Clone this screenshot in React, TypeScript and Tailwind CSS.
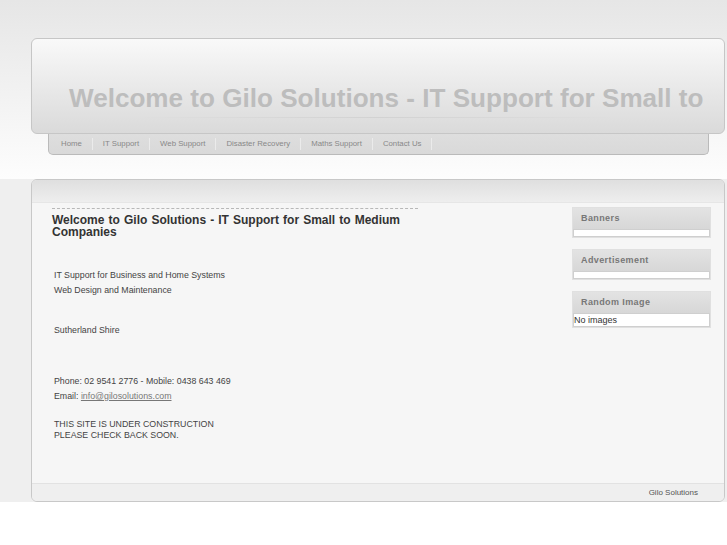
import React from 'react';

const navItems = ['Home', 'IT Support', 'Web Support', 'Disaster Recovery', 'Maths Support', 'Contact Us'];

function SideModule({ title, children, bodyClass }: { title: string; children?: React.ReactNode; bodyClass: string }) {
  return (
    <div className="mb-[11px] border border-[#e0e0e0] bg-[#dadada]">
      <div className="flex h-[21px] items-center bg-gradient-to-b from-[#e3e3e3] to-[#d7d7d7] pl-[8px] text-[9px] font-bold tracking-[0.4px] text-[#777]">
        {title}
      </div>
      <div className={`border border-[#cfcfcf] bg-white text-[9px] leading-[12px] text-[#333] ${bodyClass}`}>{children}</div>
    </div>
  );
}

export default function App() {
  return (
    <div className="min-h-[545px] bg-white font-['Liberation_Sans',Arial,sans-serif]">
      {/* Header area */}
      <div className="h-[179px] bg-gradient-to-b from-[#e6e6e6] to-[#fdfdfd] pt-[38px]">
        <div className="ml-[31px] h-[96px] w-[694px] overflow-hidden rounded-[6px] border border-[#c6c6c6] bg-gradient-to-b from-[#f9f9f9] to-[#dadada]">
          <div className="h-[78px] overflow-hidden pl-[37px] pt-[44px]">
            <h1 className="text-[26.1px] font-bold leading-[30px] text-[#bdbdbd]">
              Welcome to Gilo Solutions - IT Support for Small to Medium Companies
            </h1>
          </div>
          <div className="mx-auto h-px w-[480px] bg-gradient-to-r from-transparent via-[#d2d2d2] to-transparent" />
        </div>
        <nav className="ml-[48px] flex h-[21px] w-[661px] items-center rounded-b-[5px] border border-t-0 border-[#bababa] bg-gradient-to-b from-[#dedede] to-[#d9d9d9] pl-[2px]">
          {navItems.map((item) => (
            <div key={item} className="flex items-center">
              <span className="px-[10px] text-[7.8px] leading-[12px] text-[#888]">{item}</span>
              <span className="h-[12px] w-px bg-[#ebebeb]" />
            </div>
          ))}
        </nav>
      </div>

      {/* Main content band */}
      <div className="bg-[#efefef]">
        <div className="ml-[31px] w-[694px] overflow-hidden rounded-[6px] border border-[#c8c8c8] bg-[#f6f6f6]">
          <div className="h-[23px] border-b border-[#e6e6e6] bg-gradient-to-b from-[#dfdfdf] to-[#eeeeee]" />
          <div className="flex h-[280px] pl-[20px] pr-[13px]">
            <div className="w-[366px] pt-[5px]">
              <div className="border-t border-dashed border-[#b8b8b8]" />
              <h2 className="mt-[5px] pr-[18px] text-justify text-[12px] font-bold leading-[12px] text-[#333]">
                Welcome to Gilo Solutions - IT Support for Small to Medium Companies
              </h2>
              <div className="mt-[30px] pl-[2px] text-[8.8px] text-[#444]">
                <p className="leading-[15px]">
                  IT Support for Business and Home Systems
                  <br />
                  Web Design and Maintenance
                </p>
                <p className="mt-[25px] leading-[15px]">Sutherland Shire</p>
                <p className="mt-[36px] leading-[15px]">
                  Phone: 02 9541 2776 - Mobile: 0438 643 469
                  <br />
                  Email:{' '}
                  <a href="#" className="text-[#777] underline">
                    info@gilosolutions.com
                  </a>
                </p>
                <p className="mt-[15px] leading-[11px]">
                  THIS SITE IS UNDER CONSTRUCTION
                  <br />
                  PLEASE CHECK BACK SOON.
                </p>
              </div>
            </div>
            <div className="ml-auto w-[139px] pt-[4px]">
              <SideModule title="Banners" bodyClass="h-[8px]" />
              <SideModule title="Advertisement" bodyClass="h-[8px]" />
              <SideModule title="Random Image" bodyClass="h-[14px]">
                No images
              </SideModule>
            </div>
          </div>
          <div className="flex h-[18px] items-center justify-end border-t border-[#e2e2e2] bg-[#efefef] pr-[26px] text-[8px] text-[#555]">
            Gilo Solutions
          </div>
        </div>
      </div>
    </div>
  );
}
